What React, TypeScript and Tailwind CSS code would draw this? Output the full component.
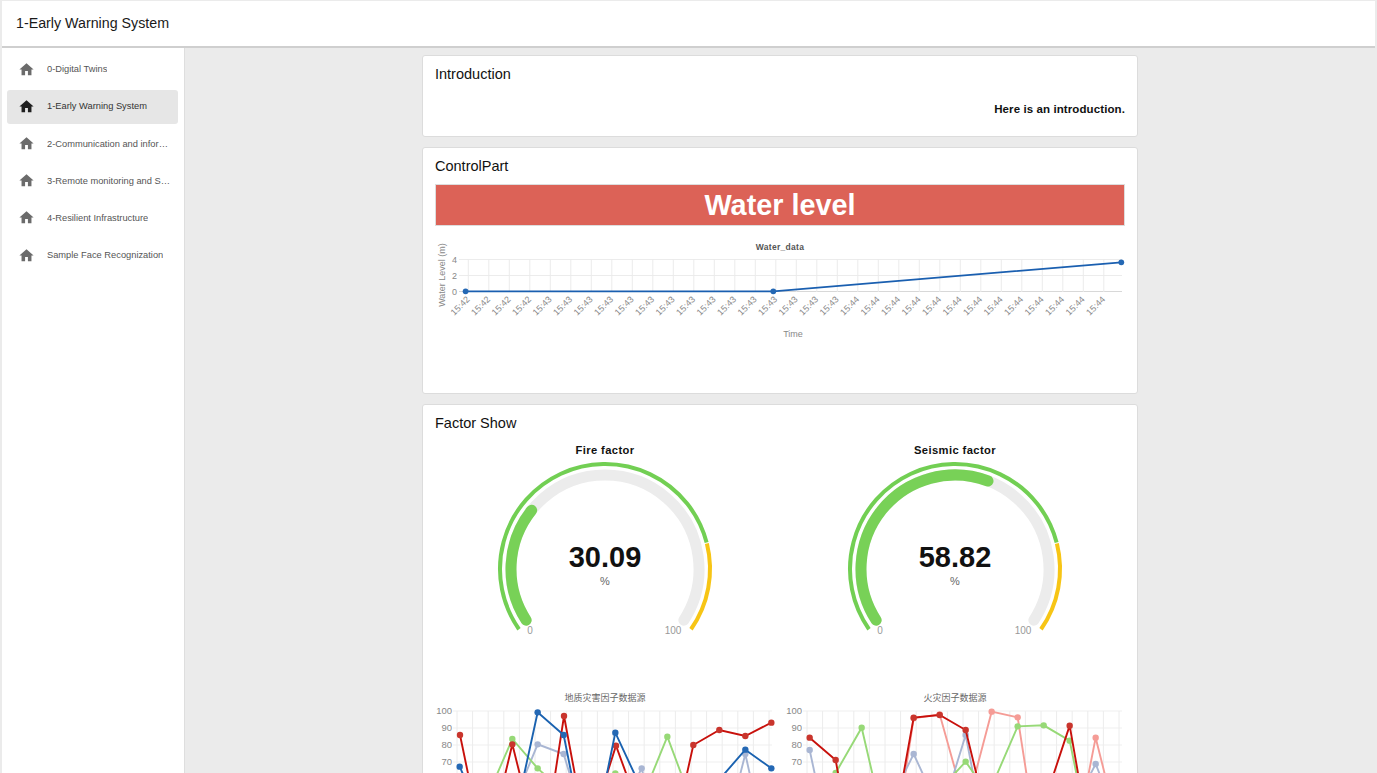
const NAV = ["0-Digital Twins","1-Early Warning System","2-Communication and information","3-Remote monitoring and Sensing","4-Resilient Infrastructure","Sample Face Recognization"];

function Home({ cls }: { cls: string }) {
  return <svg viewBox="0 0 24 24" className={"w-[17px] h-[17px] shrink-0 mb-[2px] " + cls} fill="currentColor"><path d="M10 20v-6h4v6h5v-8h3L12 3 2 12h3v8z" /></svg>;
}

function Card({ title, children, cls = "" }: { title: string; children: React.ReactNode; cls?: string }) {
  return (
    <section className={"bg-white border border-[#dcdcdc] rounded-[3px] px-3 shrink-0 " + cls}>
      <h2 className="text-[14.5px] leading-[20px] pt-[8px] text-[#111]">{title}</h2>
      {children}
    </section>
  );
}

function WaterChart() {
  const ticks = Array.from({ length: 32 }, (_, i) => i);
  return (
    <svg viewBox="435 228 691 164" className="block w-[691px] h-[164px] mt-[2px]">
      <text x="780" y="250" textAnchor="middle" fontSize="8.5" fontWeight="700" letterSpacing="0.3" fill="#555">Water_data</text>
      <text transform="translate(445 275) rotate(-90)" textAnchor="middle" fontSize="9" fill="#888">Water Level (m)</text>
      {[259.5, 275.5, 291.5].map((y, i) => (
        <g key={y}>
          <line x1="459" x2="1122" y1={y} y2={y} stroke={i === 2 ? "#d8d8d8" : "#ececec"} />
          <text x="457" y={y + 3} textAnchor="end" fontSize="9" fill="#888">{4 - i * 2}</text>
        </g>
      ))}
      {ticks.map((i) => {
        const x = 468.3 + i * 20.5;
        return (
          <g key={i}>
            <line x1={x} x2={x} y1="259" y2="292" stroke="#ececec" />
            <text transform={`translate(${x + 2} 300) rotate(-45)`} textAnchor="end" fontSize="9" fill="#888">{i < 4 ? "15:42" : i < 19 ? "15:43" : "15:44"}</text>
          </g>
        );
      })}
      <text x="793" y="337" textAnchor="middle" fontSize="9" fill="#888">Time</text>
      <polyline points="465.6,291.3 773.3,291.3 1121.3,262.3" fill="none" stroke="#1a5fb0" strokeWidth="1.8" />
      {[[465.6, 291.3], [773.3, 291.3], [1121.3, 262.3]].map(([x, y]) => <circle key={x} cx={x} cy={y} r="2.9" fill="#2468b4" />)}
    </svg>
  );
}

function polar(r: number, deg: number) {
  const a = (deg * Math.PI) / 180;
  return [r * Math.cos(a), -r * Math.sin(a)];
}
function arc(r: number, from: number, to: number) {
  const [x1, y1] = polar(r, from);
  const [x2, y2] = polar(r, to);
  return `M${x1.toFixed(2)} ${y1.toFixed(2)}A${r} ${r} 0 ${from - to > 180 ? 1 : 0} 1 ${x2.toFixed(2)} ${y2.toFixed(2)}`;
}

function Gauge({ title, value }: { title: string; value: number }) {
  const end = 215 - (value / 100) * 250 + 1.5;
  return (
    <svg viewBox="-175 -129 350 209" className="block w-[350px] h-[209px] shrink-0">
      <text x="0" y="-115" textAnchor="middle" fontSize="11.2" fontWeight="700" letterSpacing="0.4" fill="#111">{title}</text>
      <path d={arc(105, 215, 14.6)} fill="none" stroke="#72cf53" strokeWidth="4" />
      <path d={arc(105, 14, -35)} fill="none" stroke="#f7c515" strokeWidth="4" />
      <path d={arc(94, 213, -33)} fill="none" stroke="#ececec" strokeWidth="11" strokeLinecap="round" />
      <path d={arc(94, 213, end)} fill="none" stroke="#78d157" strokeWidth="11" strokeLinecap="round" />
      <text x="0" y="-2" textAnchor="middle" fontSize="29" fontWeight="700" fill="#111">{value.toFixed(2)}</text>
      <text x="0" y="16" textAnchor="middle" fontSize="11" fill="#666">%</text>
      <text x="-75" y="65" textAnchor="middle" fontSize="10" fill="#999">0</text>
      <text x="68" y="65" textAnchor="middle" fontSize="10" fill="#999">100</text>
    </svg>
  );
}

type Series = { color: string; dot: string; lines: number[][][]; dots: number[][] };

const LEFT: Series[] = [
  { color: "#a9b6d3", dot: "#a9b6d3", lines: [[[300,270],[338,178],[416,207],[435,270]],[[640,270],[650,250],[655,270]],[[945,270],[961,207],[975,270]]], dots: [[338,178],[416,207],[650,250],[961,207]] },
  { color: "#97d977", dot: "#97d977", lines: [[[215,270],[262,162],[338,250],[360,270]],[[680,270],[727,155],[770,270]]], dots: [[262,162],[338,250],[571,265],[727,155]] },
  { color: "#c8100b", dot: "#c9352d", lines: [[[105,150],[130,270]],[[240,270],[262,178],[285,270]],[[390,270],[417,93],[450,270]],[[545,270],[573,182],[605,270]],[[785,270],[805,180],[883,135],[961,153],[1039,113]]], dots: [[105,150],[262,178],[417,93],[573,182],[805,180],[883,135],[961,153],[1039,113]] },
  { color: "#1a62b0", dot: "#2468b4", lines: [[[104,245],[115,270]],[[297,270],[338,82],[416,150],[440,270]],[[545,270],[571,143],[630,270]],[[895,270],[961,194],[1039,250]]], dots: [[104,245],[338,82],[416,150],[571,143],[961,194],[1039,250]] },
];
const RIGHT: Series[] = [
  { color: "#f59c96", dot: "#f59c96", lines: [[[375,270],[401,100],[479,88],[530,270]],[[585,270],[635,80],[713,97],[740,270]],[[925,270],[947,158],[975,270]]], dots: [[401,100],[479,88],[635,80],[713,97],[947,158]] },
  { color: "#a9b6d3", dot: "#a9b6d3", lines: [[[89,195],[105,270]],[[370,270],[401,207],[430,270]],[[520,270],[557,150],[580,270]],[[930,270],[947,237],[960,270]]], dots: [[89,195],[401,207],[557,150],[947,237]] },
  { color: "#97d977", dot: "#97d977", lines: [[[150,270],[167,264],[245,128],[278,270]],[[520,270],[557,230],[585,270]],[[650,270],[713,124],[791,121],[869,167],[890,270]]], dots: [[167,264],[245,128],[557,230],[713,124],[791,121],[869,167]] },
  { color: "#c8100b", dot: "#c9352d", lines: [[[89,158],[167,225],[175,270]],[[370,270],[401,98],[479,90],[557,135],[590,270]],[[820,270],[869,122],[895,270]]], dots: [[89,158],[167,225],[401,98],[479,90],[557,135],[869,122]] },
];

function LineChart({ title, series, ox, left, right, cx }: { title: string; series: Series[]; ox: number; left: number; right: number; cx: number }) {
  const px = (p: number[]) => [ox + p[0] / 3, 685 + p[1] / 3];
  const verts = Array.from({ length: 21 }, (_, i) => left + 4 + i * 15.6).filter((x) => x < right);
  return (
    <svg viewBox={`${ox + (ox < 600 ? 10 : 0)} 688 345 90`} className="block w-[345px] h-[90px]">
      <text x={cx} y="701" textAnchor="middle" fontSize="9" fill="#666">{title}</text>
      {[711, 728, 745, 762].map((y, i) => (
        <g key={y}>
          <line x1={left} x2={right} y1={y} y2={y} stroke="#efefef" />
          <text x={left - 1} y={y + 3} textAnchor="end" fontSize="9.5" fill="#888">{100 - i * 10}</text>
        </g>
      ))}
      {verts.map((x) => <line key={x} x1={x} x2={x} y1="711" y2="780" stroke="#ececec" />)}
      {series.map((s) => (
        <g key={s.color}>
          {s.lines.map((l, i) => <polyline key={i} points={l.map((p) => px(p).join(",")).join(" ")} fill="none" stroke={s.color} strokeWidth="1.9" />)}
          {s.dots.map((d, i) => { const [x, y] = px(d); return <circle key={i} cx={x} cy={y} r="3.2" fill={s.dot} />; })}
        </g>
      ))}
    </svg>
  );
}

export default function App() {
  return (
    <div className="h-[773px] overflow-hidden bg-[#ebebeb] px-[2px] pt-px flex flex-col font-['Liberation_Sans','Noto_Sans_CJK_SC',sans-serif]">
      <header className="h-[47px] shrink-0 bg-white border-b-2 border-[#cfcfcf] flex items-center pl-[14px] pt-[1px] text-[14.25px] text-[#1a1a1a]">1-Early Warning System</header>
      <div className="flex flex-1 min-h-0">
        <aside className="w-[183px] shrink-0 bg-white border-r border-[#dedede] pl-[5px] pr-[6px] pt-[5px] flex flex-col gap-[3px]">
          {NAV.map((n, i) => (
            <div key={n} className={"h-[34.2px] flex items-center pl-[10.5px] pr-[4px] gap-[12.5px] rounded-[3px] " + (i === 1 ? "bg-[#e6e6e6]" : "")}>
              <Home cls={i === 1 ? "text-[#1f1f1f]" : "text-[#6b6b6b]"} />
              <span className={"text-[9.3px] truncate " + (i === 1 ? "text-[#333]" : "text-[#555]")}>{n}</span>
            </div>
          ))}
        </aside>
        <main className="flex-1 min-w-0 flex justify-center pt-[7px]">
          <div className="w-[716px] flex flex-col gap-[10px]">
            <Card title="Introduction" cls="h-[82px]">
              <p className="text-right text-[11.5px] font-bold text-[#111] mt-[17px] tracking-[0.1px]">Here is an introduction.</p>
            </Card>
            <Card title="ControlPart" cls="h-[247px]">
              <div className="h-[42px] mt-[8px] pt-[2px] bg-[#dc6257] border border-[#dddddd] flex items-center justify-center text-white text-[28.8px] font-bold">Water level</div>
              <WaterChart />
            </Card>
            <Card title="Factor Show" cls="pb-4">
              <div className="flex justify-center mt-[7px]">
                <Gauge title="Fire factor" value={30.09} />
                <Gauge title="Seismic factor" value={58.82} />
              </div>
              <div className="flex mt-[39px]">
                <LineChart title="地质灾害因子数据源" series={LEFT} ox={425} left={453} right={772} cx={605} />
                <LineChart title="火灾因子数据源" series={RIGHT} ox={780} left={803} right={1122} cx={955} />
              </div>
            </Card>
          </div>
        </main>
      </div>
    </div>
  );
}
